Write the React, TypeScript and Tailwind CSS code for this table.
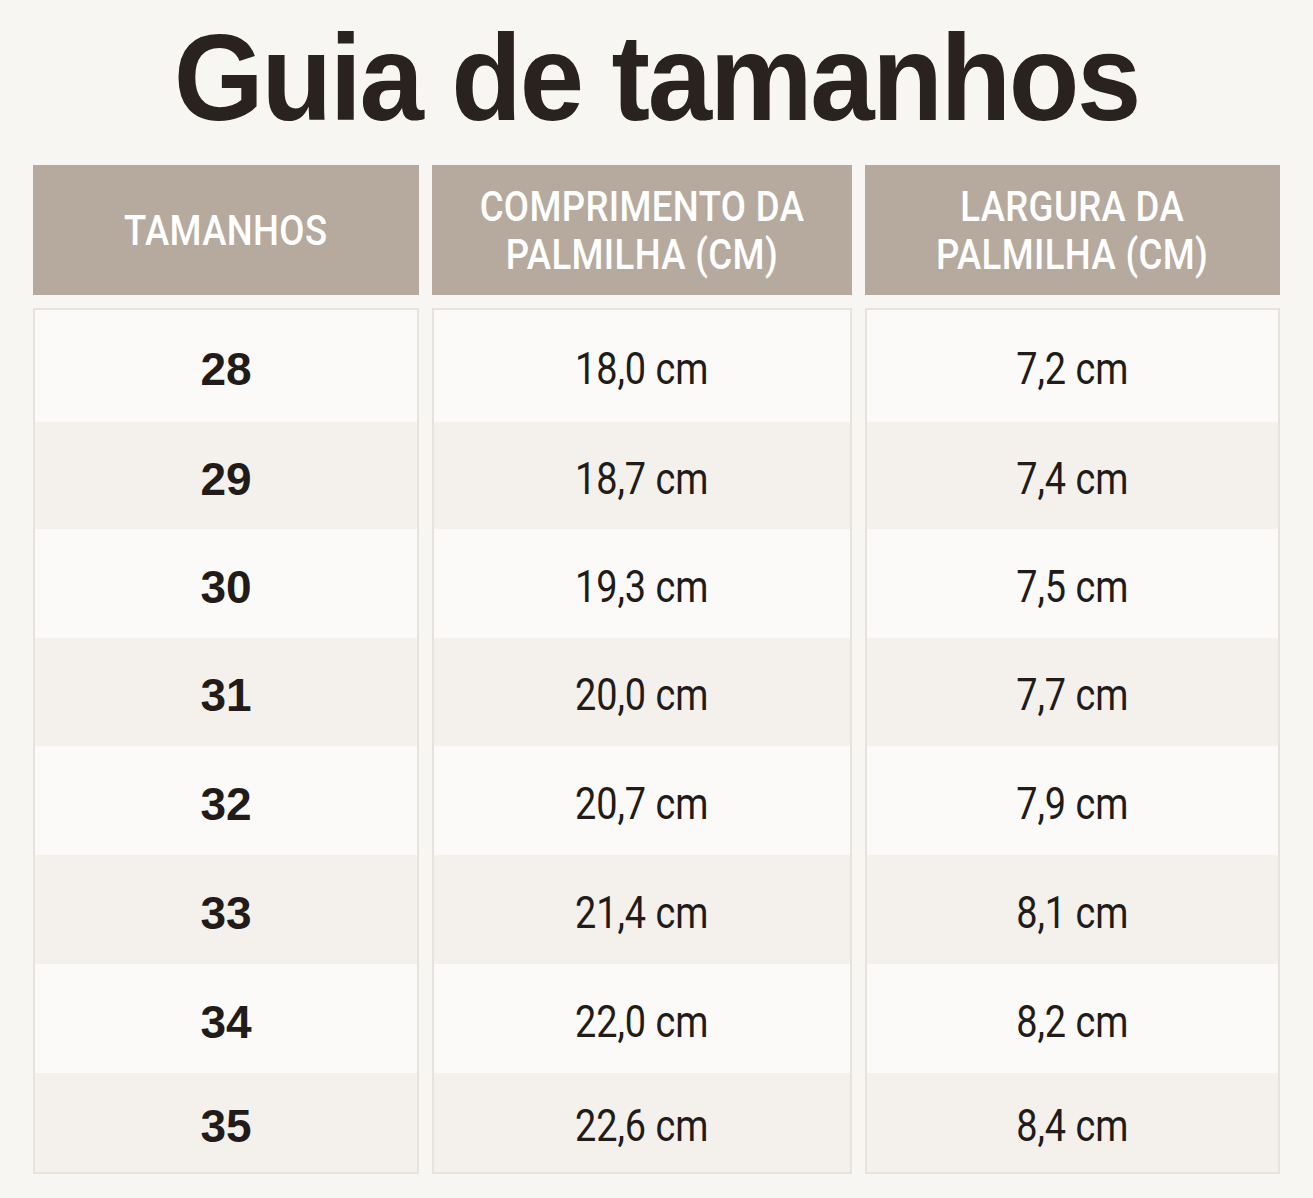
import React from "react";

const rows = [
  { s: "28", c: "18,0 cm", l: "7,2 cm", h: "h-[112px]", bg: "bg-[#fbfaf8]" },
  { s: "29", c: "18,7 cm", l: "7,4 cm", h: "h-[107px]", bg: "bg-[#f4f1ed]" },
  { s: "30", c: "19,3 cm", l: "7,5 cm", h: "h-[109px]", bg: "bg-[#fbfaf8]" },
  { s: "31", c: "20,0 cm", l: "7,7 cm", h: "h-[108px]", bg: "bg-[#f4f1ed]" },
  { s: "32", c: "20,7 cm", l: "7,9 cm", h: "h-[109px]", bg: "bg-[#fbfaf8]" },
  { s: "33", c: "21,4 cm", l: "8,1 cm", h: "h-[109px]", bg: "bg-[#f4f1ed]" },
  { s: "34", c: "22,0 cm", l: "8,2 cm", h: "h-[109px]", bg: "bg-[#fbfaf8]" },
  { s: "35", c: "22,6 cm", l: "8,4 cm", h: "h-[99px]", bg: "bg-[#f4f1ed]" },
];

function Header({ lines }: { lines: string[] }) {
  return (
    <div className="h-[130px] bg-[#b6aa9e] flex items-center justify-center">
      <div
        className="inline-block scale-x-[0.85] text-center text-white font-medium text-[43px] leading-[48px] tracking-[0.01em]"
        style={{ fontFamily: "Roboto, 'Liberation Sans', sans-serif" }}
      >
        {lines.map((t) => (
          <div key={t} className="whitespace-nowrap">{t}</div>
        ))}
      </div>
    </div>
  );
}

function Column({ lines, kind }: { lines: string[]; kind: "s" | "c" | "l" }) {
  return (
    <div className="flex flex-col">
      <Header lines={lines} />
      <div className="mt-[13px] border-2 border-[#e7e2dc] flex flex-col">
        {rows.map((r) => (
          <div key={r.s} className={`${r.h} ${r.bg} flex items-center justify-center pt-[6px]`}>
            {kind === "s" ? (
              <span
                className="text-[46px] font-bold text-[#221b17] leading-none"
                style={{ fontFamily: "'Liberation Sans', Arial, sans-serif" }}
              >
                {r.s}
              </span>
            ) : (
              <span
                className="inline-block scale-x-[0.86] text-[44px] text-[#221b17] leading-none whitespace-nowrap"
                style={{ fontFamily: "Roboto, 'Liberation Sans', sans-serif" }}
              >
                {kind === "c" ? r.c : r.l}
              </span>
            )}
          </div>
        ))}
      </div>
    </div>
  );
}

export default function App() {
  return (
    <div className="w-[1313px] h-[1198px] bg-[#f8f6f3] overflow-hidden">
      <div className="h-[165px] pt-[16px] flex justify-center">
        <h1
          className="inline-block scale-x-[0.94] text-[123px] font-bold leading-none text-[#2a221e] tracking-[-0.02em] whitespace-nowrap"
          style={{ fontFamily: "'Liberation Sans', Arial, sans-serif" }}
        >
          Guia de tamanhos
        </h1>
      </div>
      <div className="pl-[33px] grid grid-cols-[386px_420px_415px] gap-x-[13px]">
        <Column lines={["TAMANHOS"]} kind="s" />
        <Column lines={["COMPRIMENTO DA", "PALMILHA (CM)"]} kind="c" />
        <Column lines={["LARGURA DA", "PALMILHA (CM)"]} kind="l" />
      </div>
    </div>
  );
}
